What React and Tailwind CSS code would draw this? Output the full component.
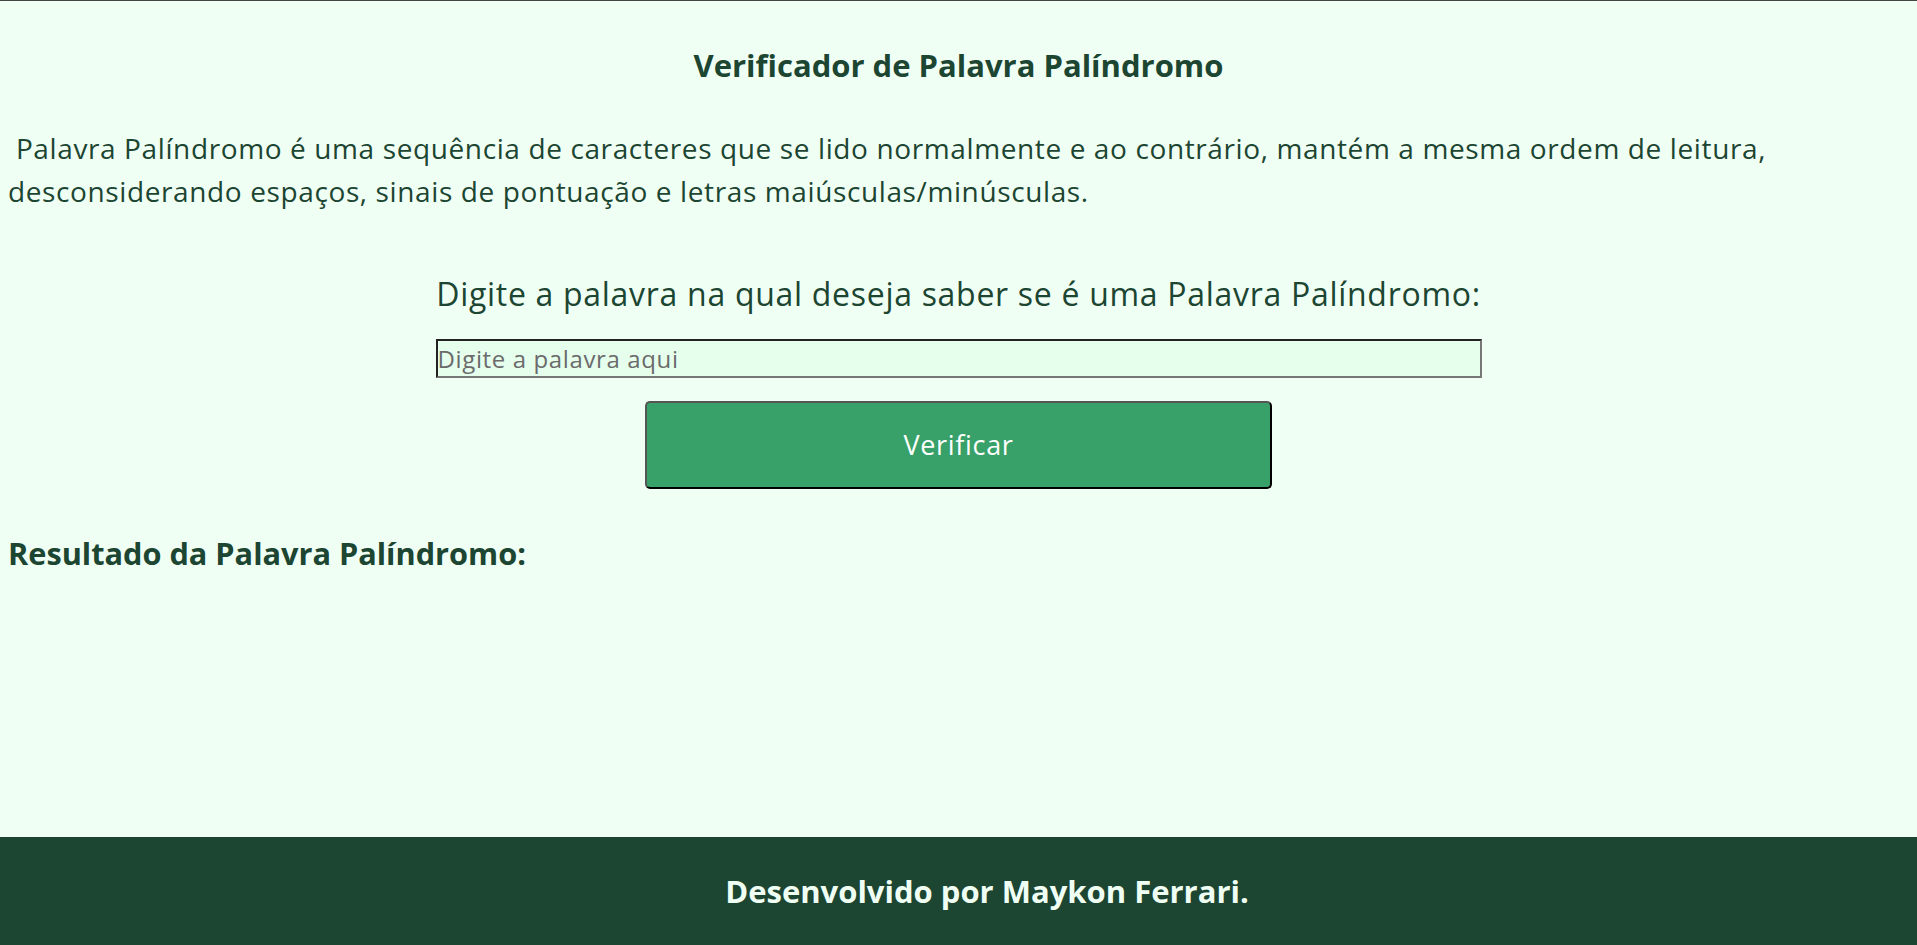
import React, { useState } from "react";

export default function App() {
  const [word, setWord] = useState("");

  return (
    <div className="min-h-[945px] flex flex-col bg-[#f0fff4] text-[#1c4532] border-t border-[#444]" style={{ fontFamily: "'Open Sans', 'Noto Sans', sans-serif" }}>
      <main className="flex-1 px-2">
        {/* Title */}
        <h1 className="text-[31px] font-bold text-center pt-[44px] leading-[40px]">
          Verificador de Palavra Palíndromo
        </h1>

        {/* Description */}
        <p className="text-[28px] tracking-[0.022em] leading-[43px] mt-[42px] whitespace-pre-wrap">
          {" "}Palavra Palíndromo é uma sequência de caracteres que se lido normalmente e ao contrário, mantém a mesma ordem de leitura, desconsiderando espaços, sinais de pontuação e letras maiúsculas/minúsculas.
        </p>

        {/* Form */}
        <div className="flex flex-col items-center mt-[59px]">
          <div className="w-[1046px] flex flex-col">
            <label className="text-[32px] tracking-[0.022em] leading-[44px] text-center whitespace-nowrap">
              Digite a palavra na qual deseja saber se é uma Palavra Palíndromo:
            </label>
            <input
              value={word}
              onChange={(e) => setWord(e.target.value)}
              placeholder="Digite a palavra aqui"
              className="mt-[23px] h-[39px] w-full bg-[#e6ffed] border-2 border-t-[#222] border-l-[#222] border-b-[#777] border-r-[#777] px-0 text-[24px] tracking-[0.026em] placeholder:text-[#6b6b6b] outline-none"
            />
          </div>
          <button className="mt-[23px] w-[627px] h-[88px] bg-[#38a169] text-white text-[27px] tracking-[0.025em] rounded-[5px] border-2 border-t-[#555] border-l-[#555] border-b-black border-r-black">
            Verificar
          </button>
        </div>

        {/* Result */}
        <h2 className="text-[30.7px] font-bold mt-[42px] leading-[44px]">
          Resultado da Palavra Palíndromo:
        </h2>
      </main>

      {/* Footer */}
      <footer className="h-[108px] bg-[#1c4532] flex items-center justify-center pl-[57px]">
        <p className="text-[#f0fff4] text-[31px] font-bold">Desenvolvido por Maykon Ferrari.</p>
      </footer>
    </div>
  );
}
